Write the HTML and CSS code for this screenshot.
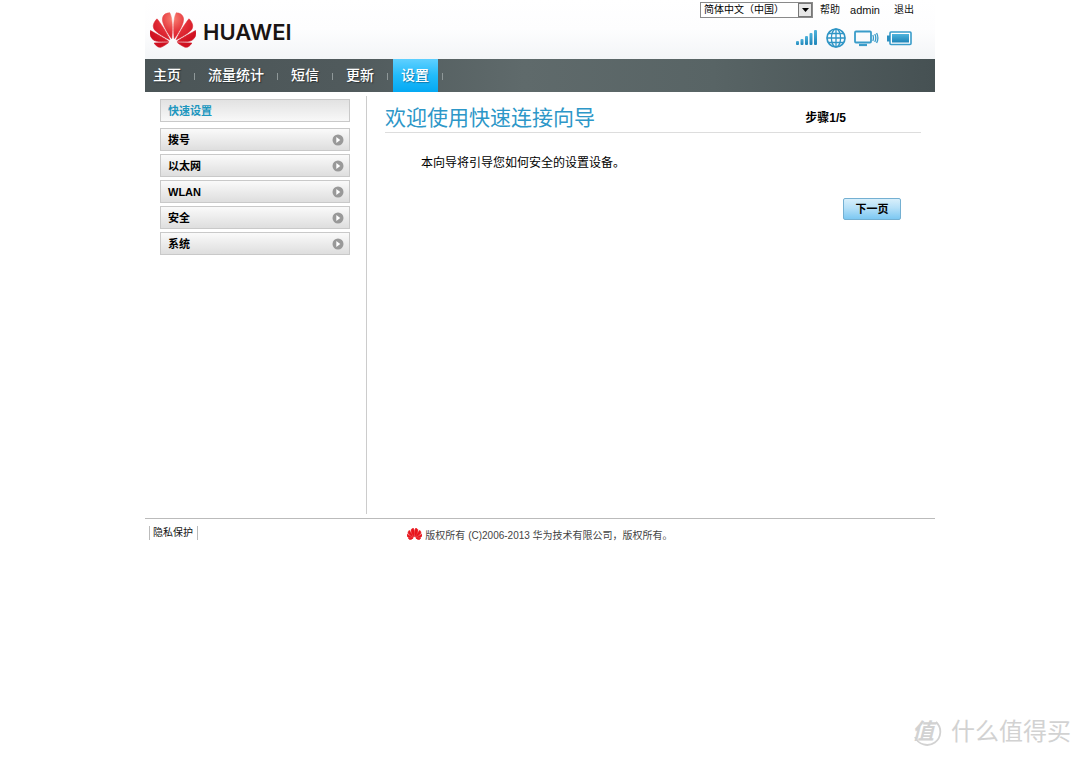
FILE: index.html
```html
<!DOCTYPE html>
<html lang="zh-CN">
<head>
<meta charset="utf-8">
<title>快速设置</title>
<link rel="stylesheet" href="styles.css">
</head>
<body>
<svg width="0" height="0" class="defs" aria-hidden="true">
  <defs>
    <radialGradient id="petal" gradientUnits="userSpaceOnUse" cx="12" cy="6" r="14">
      <stop offset="0" stop-color="#f98273"/>
      <stop offset=".5" stop-color="#e4323a"/>
      <stop offset="1" stop-color="#cf1020"/>
    </radialGradient>
    <linearGradient id="blue" x1="0" y1="0" x2="0" y2="1">
      <stop offset="0" stop-color="#4fb3dc"/>
      <stop offset="1" stop-color="#1d84b8"/>
    </linearGradient>
    <symbol id="flower" viewBox="0 2.9 24 18.2">
      <path d="M3.67 6.14S1.82 7.91 1.72 9.78v.35c.08 1.51 1.22 2.4 1.22 2.4 1.83 1.79 6.26 4.04 7.3 4.55 0 0 .06.03.1-.01l.02-.04v-.04C7.52 10.8 3.67 6.14 3.67 6.14zM9.65 18.6c-.02-.08-.1-.08-.1-.08l-7.38.26c.8 1.43 2.15 2.53 3.56 2.2.96-.25 3.16-1.78 3.88-2.3.06-.05.04-.09.04-.09zm.08-.78C6.49 15.63.21 12.28.21 12.28c-.15.46-.2.9-.21 1.3v.07c0 1.07.4 1.82.4 1.82.8 1.69 2.34 2.2 2.34 2.2.7.3 1.4.31 1.4.31.12.02 4.4 0 5.54 0 .05 0 .08-.05.08-.05v-.06c0-.03-.03-.05-.03-.05zM9.06 3.19a3.42 3.42 0 00-2.57 3.15v.41c.03.6.16 1.05.16 1.05.66 2.9 3.86 7.65 4.55 8.65.05.05.1.03.1.03a.1.1 0 00.06-.1c1.06-10.6-1.11-13.42-1.11-13.42-.32.02-1.19.23-1.19.23zm8.299 2.27s-.49-1.8-2.44-2.28c0 0-.57-.14-1.17-.22 0 0-2.18 2.81-1.12 13.43.01.07.06.08.06.08.07.03.1-.03.1-.03.72-1.03 3.9-5.76 4.55-8.64 0 0 .36-1.4.02-2.34zm-2.92 13.07s-.07 0-.09.05c0 0-.01.07.03.1.7.51 2.85 2 3.88 2.3 0 0 .16.05.43.06h.14c.69-.02 1.9-.37 3-2.26l-7.4-.25zm7.83-8.41c.14-2.06-1.94-3.97-1.94-3.98 0 0-3.85 4.66-6.67 10.8 0 0-.03.08.02.13l.04.01h.06c1.06-.53 5.46-2.77 7.28-4.54 0 0 1.15-.93 1.21-2.42zm1.52 2.14s-6.28 3.37-9.52 5.55c0 0-.05.04-.03.11 0 0 .03.06.07.06 1.16 0 5.56 0 5.67-.02 0 0 .57-.02 1.27-.29 0 0 1.56-.5 2.37-2.27 0 0 .73-1.45.17-3.14z"/>
    </symbol>
    <symbol id="go" viewBox="0 0 12 12">
      <circle cx="6" cy="6" r="5.5" fill="#999"/>
      <path d="M4.3 3l4 3-4 3z" fill="#fff"/>
    </symbol>
  </defs>
</svg>
<div class="page">
  <header class="header">
    <div class="brand">
      <svg class="brand-mark" fill="url(#petal)" stroke="url(#petal)" stroke-width=".3" aria-hidden="true"><use href="#flower"/></svg>
      <span class="brand-name">HUAWEI</span>
    </div>
    <div class="tools">
      <div class="account">
        <div class="lang">
          <select class="lang-select" aria-label="语言"><option>简体中文（中国）</option></select>
          <span class="lang-arrow" aria-hidden="true"><svg width="7" height="4" viewBox="0 0 7 4"><path d="M0 0h7L3.500 4z"/></svg></span>
        </div>
        <a class="account-link" href="#help">帮助</a>
        <span class="user">admin</span>
        <a class="account-link logout" href="#logout">退出</a>
      </div>
      <div class="status">
        <svg width="22" height="16" viewBox="0 0 22 16" fill="url(#blue)"><rect x="0" y="11" width="3" height="4" rx="1"/><rect x="4.500" y="9" width="3" height="6" rx="1"/><rect x="9" y="6" width="3" height="9" rx="1"/><rect x="13.500" y="3" width="3" height="12" rx="1"/><rect x="18" y="0" width="3" height="15" rx="1"/></svg>
        <svg width="20" height="20" viewBox="0 0 20 20" fill="none" stroke="#2f95c5" stroke-width="1.300"><circle cx="10" cy="10" r="9" stroke-width="1.700"/><ellipse cx="10" cy="10" rx="4.600" ry="9"/><path d="M10 1v18M1 10h18M2.500 5.500h15M2.500 14.500h15"/></svg>
        <svg width="25" height="18" viewBox="0 0 25 18" fill="none" stroke="#3a9cc9"><rect x="1" y="2.500" width="16" height="11" rx="1" stroke-width="1.800"/><path d="M5 16h8" stroke-width="2.200"/><path d="M18.800 6q1.300 3 0 6M20.800 5q2 4 0 8M22.600 4q2.600 5 0 10" stroke-width="1.300"/></svg>
        <svg width="25" height="15" viewBox="0 0 25 15"><rect x="3" y="1" width="21" height="12.500" rx="1" fill="#fff" stroke="#399cca" stroke-width="1.600"/><path d="M0 4.500h3v6H0z" fill="#2b8fc0"/><rect x="5" y="3" width="17" height="8.500" fill="url(#blue)"/></svg>
      </div>
    </div>
  </header>
  <nav class="nav">
    <a class="nav-item" href="#home">主页</a>
    <a class="nav-item" href="#stats">流量统计</a>
    <a class="nav-item" href="#sms">短信</a>
    <a class="nav-item" href="#update">更新</a>
    <a class="nav-item active" href="#settings">设置</a>
  </nav>
  <div class="body">
    <aside class="side">
      <a class="side-item current" href="#quick">快速设置</a>
      <a class="side-item" href="#dial">拨号<svg class="go"><use href="#go"/></svg></a>
      <a class="side-item" href="#ethernet">以太网<svg class="go"><use href="#go"/></svg></a>
      <a class="side-item" href="#wlan">WLAN<svg class="go"><use href="#go"/></svg></a>
      <a class="side-item" href="#security">安全<svg class="go"><use href="#go"/></svg></a>
      <a class="side-item" href="#system">系统<svg class="go"><use href="#go"/></svg></a>
    </aside>
    <main class="main">
      <div class="title-row">
        <h1 class="title">欢迎使用快速连接向导</h1>
        <span class="step">步骤1/5</span>
      </div>
      <p class="intro">本向导将引导您如何安全的设置设备。</p>
      <div class="actions"><button class="next" type="button">下一页</button></div>
    </main>
  </div>
  <footer class="footer">
    <a class="privacy" href="#privacy">隐私保护</a>
    <p class="copyright"><svg class="foot-mark" aria-hidden="true"><use href="#flower"/></svg><span>版权所有 (C)2006-2013 华为技术有限公司，版权所有。</span></p>
  </footer>
</div>
<div class="watermark"><span class="seal"><svg class="seal-ring" viewBox="0 0 30 30" fill="none" stroke="#d2d2d2" stroke-width="1.800"><path d="M24 5a13.200 13.200 0 1 1-21 15"/></svg>值</span><span>什么值得买</span></div>
</body>
</html>
```
FILE: styles.css
```css
* { box-sizing: border-box; }
body {
  margin: 0;
  min-height: 100vh;
  position: relative;
  background: #fff;
  color: #111;
  font: 10px/16px "Liberation Sans", "Noto Sans CJK SC", sans-serif;
}
a { color: inherit; text-decoration: none; }
.defs { position: absolute; }
.page { max-width: 790px; margin: 0 auto; }

.header {
  display: flex;
  justify-content: space-between;
  height: 59px;
  background: linear-gradient(#fff, #fdfdfe 50%, #f3f5f7);
}
.brand { display: flex; align-items: center; gap: 7px; padding-left: 5px; }
.brand-mark { width: 46px; height: 36px; }
.brand-name { font: 600 22px/28px Inter, "Liberation Sans", sans-serif; color: #1a1413; padding-top: 5px; }
.tools { display: flex; flex-direction: column; gap: 10px; align-items: flex-end; padding: 2px 21px 0 0; }
.account { display: flex; align-items: center; }
.lang { position: relative; display: flex; margin-right: 7px; }
.lang-select {
  appearance: none;
  width: 113px;
  height: 16px;
  padding: 0 18px 0 3px;
  border: 1px solid #8a8a8a;
  border-radius: 0;
  background: #fff;
  color: #000;
  font: inherit;
  line-height: 14px;
}
.lang-arrow {
  position: absolute;
  top: 1px;
  right: 1px;
  bottom: 1px;
  width: 14px;
  display: flex;
  align-items: center;
  justify-content: center;
  border: 1px solid #777;
  background: #e6e6e6;
  pointer-events: none;
}
.user { font-size: 11px; margin: 0 14px 0 10px; }
.status { display: flex; align-items: center; gap: 8px; margin-right: 2px; }

.nav {
  display: flex;
  height: 33px;
  background: linear-gradient(90deg, #4b5557, #505a5c 25%, #5f6a6b 48%, #586465 72%, #465153);
  color: #fff;
  font-size: 14px;
  font-weight: 500;
  line-height: 32px;
}
.nav-item { padding: 0 9px 0 8px; text-shadow: 1px 1px 1px #2b3335; }
.nav-item::after {
  content: "";
  float: right;
  width: 1px;
  height: 7px;
  margin: 14px -14px 0 0;
  background: #8f9899;
}
.nav-item + .nav-item { margin-left: 10px; }
.nav-item.active { background: linear-gradient(#5fd0ff, #22bbfb 50%, #04a9f3); text-shadow: 1px 1px 1px #0c79ad; }

.body { display: flex; min-height: 426px; padding: 4px 0; }
.side {
  flex: none;
  width: 222px;
  display: flex;
  flex-direction: column;
  gap: 3px;
  padding: 3px 16px 0 15px;
  border-right: 1px solid #ccc;
}
.side-item {
  display: flex;
  align-items: center;
  justify-content: space-between;
  height: 23px;
  padding: 0 5px 0 7px;
  border: 1px solid #c9c9c9;
  background: linear-gradient(#fafafa, #dedede);
  color: #000;
  font-size: 11px;
  font-weight: bold;
}
.side-item.current { margin-bottom: 3px; background: linear-gradient(#e2e2e2, #f8f8f8); color: #1d97bf; }
.go { width: 12px; height: 12px; }

.main { flex: 1; padding: 8px 14px 0 18px; font-size: 12px; }
.title-row {
  display: flex;
  align-items: center;
  justify-content: space-between;
  height: 29px;
  padding-right: 75px;
  border-bottom: 1px solid #ddd;
}
.title { margin: 0; color: #2d97c8; font-size: 21px; font-weight: 400; line-height: 28px; }
.step { color: #000; font-weight: bold; }
.intro { margin: 22px 0 0; padding-left: 36px; color: #000; }
.actions { display: flex; justify-content: flex-end; padding: 27px 20px 0 0; }
.next {
  width: 58px;
  height: 22px;
  padding: 0;
  border: 1px solid #74b0d2;
  border-radius: 2px;
  background: linear-gradient(#d8effb, #b5e0f8 45%, #7cc8f2);
  color: #000;
  font: bold 11px/18px "Liberation Sans", "Noto Sans CJK SC", sans-serif;
}

.footer { display: grid; grid-template-columns: 1fr auto 1fr; border-top: 1px solid #bbb; padding-top: 7px; }
.privacy { justify-self: start; height: 14px; margin: 0 0 0 4px; padding: 0 4px 0 3px; border: solid #bbb; border-width: 0 1px; line-height: 14px; }
.copyright { display: flex; gap: 3px; margin: 2px 0 0; color: #444; }
.foot-mark { width: 15px; height: 12px; fill: #e8141c; stroke: #e8141c; stroke-width: 1px; }

.watermark {
  position: absolute;
  right: 9px;
  bottom: 10px;
  display: flex;
  align-items: center;
  gap: 9px;
  color: #d2d2d2;
  font-size: 24px;
  line-height: 32px;
}
.seal { position: relative; width: 30px; font-weight: bold; font-size: 22px; font-style: italic; }
.seal-ring { position: absolute; inset: 1px 0 0; width: 30px; height: 30px; }
```
